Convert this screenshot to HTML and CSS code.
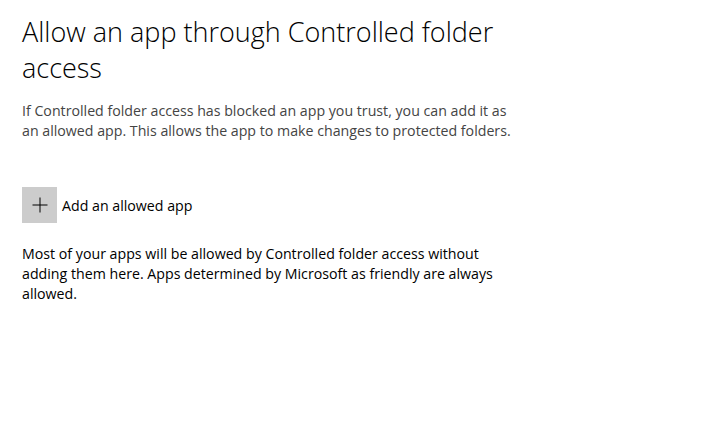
FILE: index.html
```html
<!DOCTYPE html>
<html lang="en">
<head>
<meta charset="utf-8">
<title>Allow an app through Controlled folder access</title>
<link rel="stylesheet" href="styles.css">
</head>
<body>
<main class="page">
  <h1 class="title">Allow an app through Controlled folder access</h1>
  <p class="intro">If Controlled folder access has blocked an app you trust, you can add it as an allowed app. This allows the app to make changes to protected folders.</p>
  <button class="add-btn" type="button">
    <span class="add-icon">
      <svg width="16" height="16" viewBox="0 0 16 16" aria-hidden="true"><path d="M8 0.5V15.5M0.5 8H15.5" stroke="#000" stroke-width="1" fill="none"/></svg>
    </span>
    <span class="add-label">Add an allowed app</span>
  </button>
  <p class="note">Most of your apps will be allowed by Controlled folder access without adding them here. Apps determined by Microsoft as friendly are always allowed.</p>
</main>
</body>
</html>
```

FILE: styles.css
```css
html, body {
  margin: 0;
  padding: 0;
  background: #fff;
}
body {
  font-family: "Open Sans", "Noto Sans", sans-serif;
  color: #000;
}
.page {
  padding: 14px 0 0 22px;
  width: 494px;
}
.title {
  margin: 0;
  font-size: 27px;
  font-weight: 300;
  line-height: 36px;
  color: #000;
}
.intro {
  margin: 15px 0 0;
  font-size: 14.2px;
  line-height: 20px;
  color: #444;
}
.add-btn {
  display: flex;
  align-items: center;
  gap: 5px;
  margin-top: 46px;
  padding: 0;
  border: 0;
  background: none;
  font: inherit;
  cursor: pointer;
}
.add-icon {
  display: flex;
  align-items: center;
  justify-content: center;
  width: 35px;
  height: 36px;
  background: #ccc;
}
.add-label {
  font-size: 14.2px;
  color: #000;
}
.note {
  margin: 21px 0 0;
  width: 480px;
  font-size: 14.2px;
  line-height: 20px;
  color: #000;
}
```
